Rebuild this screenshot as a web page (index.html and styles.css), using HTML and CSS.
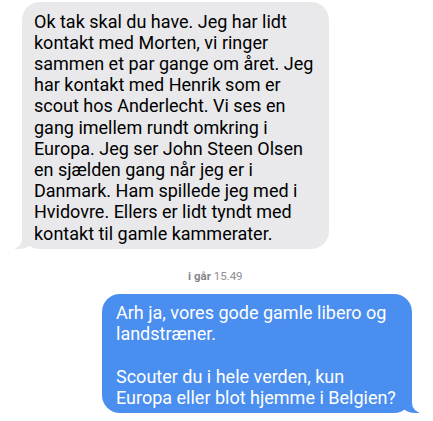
FILE: index.html
```html
<!DOCTYPE html>
<html lang="da">
<head>
<meta charset="utf-8">
<link rel="stylesheet" href="styles.css">
</head>
<body>
<div class="thread">
  <div class="bubble received">Ok tak skal du have. Jeg har lidt
kontakt med Morten, vi ringer
sammen et par gange om året. Jeg
har kontakt med Henrik som er
scout hos Anderlecht. Vi ses en
gang imellem rundt omkring i
Europa. Jeg ser John Steen Olsen
en sjælden gang når jeg er i
Danmark. Ham spillede jeg med i
Hvidovre. Ellers er lidt tyndt med
kontakt til gamle kammerater.</div>
  <div class="stamp"><b>i går</b> 15.49</div>
  <div class="bubble sent"><p>Arh ja, vores gode gamle libero og
landstræner.</p><p>Scouter du i hele verden, kun
Europa eller blot hjemme i Belgien?</p></div>
</div>
</body>
</html>
```
FILE: styles.css
```css
html, body { margin: 0; padding: 0; background: #fff; }
body { font-family: Roboto, "Liberation Sans", sans-serif; }
.thread {
  width: 433px;
  height: 421px;
  display: flex;
  flex-direction: column;
  align-items: flex-start;
  padding-top: 2px;
  box-sizing: border-box;
  overflow: hidden;
}
.bubble {
  position: relative;
  font-size: 18px;
  line-height: 21.2px;
  border-radius: 18px;
  box-sizing: border-box;
  white-space: pre;
}
.received {
  margin-left: 22px;
  width: 307px;
  padding: 8.5px 11px 5px 12px;
  background: #e9e9eb;
  color: #000;
}
.received::before {
  content: "";
  position: absolute;
  left: -7px;
  bottom: 0;
  width: 20px;
  height: 18px;
  background: #e9e9eb;
  border-bottom-right-radius: 16px 14px;
}
.received::after {
  content: "";
  position: absolute;
  left: -12px;
  bottom: 0;
  width: 12px;
  height: 18px;
  background: #fff;
  border-bottom-right-radius: 10px;
}
.stamp {
  margin-top: 20px;
  margin-left: 188px;
  font-size: 11.5px;
  color: #8e8e93;
  line-height: 14px;
}
.stamp b { font-weight: 700; color: #86868b; }
.sent {
  margin-top: 11px;
  margin-left: 102px;
  width: 310px;
  padding: 8.25px 14px 5px 14px;
  background: #4a8ef0;
  color: #fff;
}
.sent p { margin: 0; }
.sent p + p { margin-top: 21.2px; }
.sent::before {
  content: "";
  position: absolute;
  right: -7px;
  bottom: 0;
  width: 20px;
  height: 18px;
  background: #4a8ef0;
  border-bottom-left-radius: 16px 14px;
}
.sent::after {
  content: "";
  position: absolute;
  right: -12px;
  bottom: 0;
  width: 12px;
  height: 18px;
  background: #fff;
  border-bottom-left-radius: 10px;
}
```
